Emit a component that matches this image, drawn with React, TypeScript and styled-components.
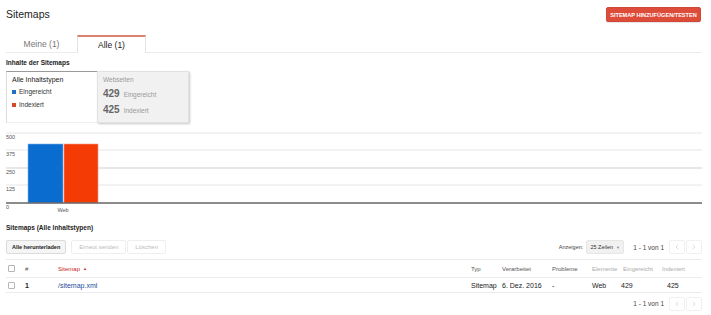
import React from 'react'
import styled, {createGlobalStyle, css} from 'styled-components'
import {ChevronLeft, ChevronRight} from 'lucide-react'

const GlobalStyle = createGlobalStyle`
  body {
    margin: 0;
    background: #fff;
    font-family: 'Liberation Sans', Arial, sans-serif;
    color: #222;
  }
`

const Page = styled.div`
  width: 711px;
  box-sizing: border-box;
  padding: 7px 9px 0 6px;
`

const Header = styled.div`
  display: flex;
  justify-content: space-between;
  align-items: flex-start;
  height: 15px;
`

const Title = styled.h1`
  margin: 0;
  font-size: 10.5px;
  line-height: 15px;
  font-weight: normal;
  color: #222;
`

const AddButton = styled.button`
  box-sizing: border-box;
  width: 95px;
  height: 15px;
  margin-right: 1px;
  padding: 0;
  background: #dd4b39;
  border: 1px solid #d14836;
  border-radius: 2px;
  color: #fff;
  font: bold 5.6px 'Liberation Sans', Arial, sans-serif;
  box-shadow: 0 1px 1px rgba(0, 0, 0, 0.1);
`

const TabBar = styled.div`
  display: flex;
  margin-top: 13px;
  height: 17px;
  border-bottom: 1px solid #ebebeb;
`

const Tab = styled.div<{$active?: boolean}>`
  box-sizing: border-box;
  height: 18px;
  display: flex;
  align-items: center;
  justify-content: center;
  font-size: 8.5px;
  width: 71px;
  color: #777;
  ${p =>
    p.$active &&
    css`
      width: 69px;
      color: #222;
      background: #fff;
      border-top: 2px solid #d8846f;
      border-left: 1px solid #e3e3e3;
      border-right: 1px solid #e3e3e3;
      margin-bottom: -1px;
    `}
`

const SectionTitle = styled.div<{$top: number}>`
  margin-top: ${p => p.$top}px;
  font-size: 6.5px;
  line-height: 8px;
  font-weight: bold;
  color: #222;
`

const LegendRow = styled.div`
  display: flex;
  margin-top: 4px;
  height: 52px;
`

const LegendBox = styled.div`
  box-sizing: border-box;
  width: 91px;
  padding: 3px 0 0 5px;
  border-top: 1px solid #9a9a9a;
  border-left: 1px solid #dcdcdc;
  border-bottom: 1px solid #eee;
  display: flex;
  flex-direction: column;
  gap: 3px;
`

const LegendHead = styled.div`
  font-size: 7px;
  line-height: 9px;
  color: #222;
`

const LegendItem = styled.div`
  display: flex;
  align-items: center;
  gap: 3px;
  font-size: 6.5px;
  line-height: 9px;
  color: #333;
  & + & {
    margin-top: 1px;
  }
`

const Swatch = styled.span<{$color: string}>`
  width: 4px;
  height: 4px;
  background: ${p => p.$color};
`

const StatsBox = styled.div`
  box-sizing: border-box;
  width: 92px;
  padding: 3px 0 0 5px;
  background: #f1f1f1;
  border: 1px solid #e2e2e2;
  box-shadow: 1px 1px 2px rgba(0, 0, 0, 0.22);
`

const StatsHead = styled.div`
  font-size: 6.5px;
  line-height: 9px;
  color: #999;
  margin-bottom: 2px;
`

const Stat = styled.div`
  display: flex;
  align-items: baseline;
  gap: 4px;
  height: 16px;
  line-height: 16px;
`

const StatValue = styled.span`
  font-size: 10px;
  font-weight: bold;
  color: #666;
`

const StatLabel = styled.span`
  font-size: 6.5px;
  color: #999;
`

const Chart = styled.svg`
  display: block;
  margin-top: 5px;
  font-family: 'Liberation Sans', Arial, sans-serif;
`

const Toolbar = styled.div`
  display: flex;
  align-items: center;
  margin-top: 8px;
  height: 14px;
`

const ActionButton = styled.button<{$primary?: boolean}>`
  box-sizing: border-box;
  height: 14px;
  padding: 0 7px;
  margin-right: 1px;
  background: #fff;
  border: 1px solid #eee;
  border-radius: 2px;
  color: #bbb;
  font: 6px 'Liberation Sans', Arial, sans-serif;
  ${p =>
    p.$primary &&
    css`
      padding: 0 5px;
      margin-right: 5px;
      background: #f5f5f5;
      border-color: #dcdcdc;
      color: #222;
      font-weight: bold;
      font-size: 5.5px;
    `}
`

const Spacer = styled.div`
  flex: 1;
`

const ShowLabel = styled.span`
  font-size: 5.5px;
  color: #444;
  margin-right: 3px;
`

const RowsSelect = styled.div`
  box-sizing: border-box;
  display: flex;
  align-items: center;
  justify-content: center;
  gap: 3px;
  width: 38px;
  height: 14px;
  background: #f1f1f1;
  border: 1px solid #e6e6e6;
  border-radius: 2px;
  font-size: 5.5px;
  color: #333;
`

const Caret = styled.span`
  font-size: 4px;
  color: #888;
`

const PageInfo = styled.span`
  font-size: 6.5px;
  color: #444;
  margin: 0 5px 0 9px;
`

const PageButton = styled.button`
  box-sizing: border-box;
  width: 16px;
  height: 14px;
  padding: 0;
  display: flex;
  align-items: center;
  justify-content: center;
  background: #fff;
  border: 1px solid #f0f0f0;
  border-radius: 2px;
  color: #bbb;
  & + & {
    margin-left: 1px;
  }
`

const Table = styled.div`
  margin-top: 5px;
  width: 696px;
`

const Row = styled.div<{$head?: boolean}>`
  display: grid;
  grid-template-columns: 17px 33px 413px 31px 50px 40px 31px 39px 42px;
  align-items: center;
  height: ${p => (p.$head ? 17 : 14)}px;
  border-top: 1px solid #ececec;
  ${p =>
    !p.$head &&
    css`
      border-bottom: 1px solid #ececec;
    `}
`

const HeadCell = styled.div<{$muted?: boolean; $sorted?: boolean}>`
  padding-left: 2px;
  font-size: 6px;
  color: ${p => (p.$sorted ? '#c5281c' : p.$muted ? '#aaa' : '#555')};
`

const Cell = styled.div<{$bold?: boolean; $link?: boolean; $shift?: number}>`
  padding-left: ${p => 2 + (p.$shift || 0)}px;
  font-size: 7px;
  color: ${p => (p.$link ? '#1f4e9c' : '#222')};
  font-weight: ${p => (p.$bold ? 'bold' : 'normal')};
`

const Checkbox = styled.span`
  display: block;
  box-sizing: border-box;
  width: 7px;
  height: 7px;
  border: 1px solid #b5b5b5;
  border-radius: 1px;
  background: #fff;
`

const SortArrow = styled.span`
  font-size: 4px;
  margin-left: 3px;
  vertical-align: 1px;
`

const Footer = styled.div`
  display: flex;
  align-items: center;
  justify-content: flex-end;
  height: 21px;
`

const grid = [
  {y: 5, label: '500', color: '#e6e6e6'},
  {y: 22, label: '375', color: '#e6e6e6'},
  {y: 40, label: '250', color: '#cfcfcf'},
  {y: 57, label: '125', color: '#e6e6e6'},
]

const Pager = () => (
  <>
    <PageInfo>1 - 1 von 1</PageInfo>
    <PageButton>
      <ChevronLeft size={8} strokeWidth={1.5} />
    </PageButton>
    <PageButton>
      <ChevronRight size={8} strokeWidth={1.5} />
    </PageButton>
  </>
)

export default function App() {
  return (
    <Page>
      <GlobalStyle />
      <Header>
        <Title>Sitemaps</Title>
        <AddButton>SITEMAP HINZUFÜGEN/TESTEN</AddButton>
      </Header>

      <TabBar>
        <Tab>Meine (1)</Tab>
        <Tab $active>Alle (1)</Tab>
      </TabBar>

      <SectionTitle $top={6}>Inhalte der Sitemaps</SectionTitle>

      <LegendRow>
        <LegendBox>
          <LegendHead>Alle Inhaltstypen</LegendHead>
          <LegendItem>
            <Swatch $color='#1f6fc5' />
            Eingereicht
          </LegendItem>
          <LegendItem>
            <Swatch $color='#d8472c' />
            Indexiert
          </LegendItem>
        </LegendBox>
        <StatsBox>
          <StatsHead>Webseiten</StatsHead>
          <Stat>
            <StatValue>429</StatValue>
            <StatLabel>Eingereicht</StatLabel>
          </Stat>
          <Stat>
            <StatValue>425</StatValue>
            <StatLabel>Indexiert</StatLabel>
          </Stat>
        </StatsBox>
      </LegendRow>

      <Chart width={696} height={90} viewBox='0 0 696 90'>
        {grid.map(g => (
          <g key={g.label}>
            <line x1={0} x2={696} y1={g.y} y2={g.y} stroke={g.color} strokeWidth={1} />
            <text x={0} y={g.y + 6} fontSize={5.5} fill='#555'>
              {g.label}
            </text>
          </g>
        ))}
        <rect x={22} y={16} width={35} height={59} fill='#0a6ccf' stroke='#7fb2e6' strokeWidth={0.6} />
        <rect x={58} y={16} width={34} height={59} fill='#f43b06' stroke='#f79a80' strokeWidth={0.6} />
        <line x1={0} x2={696} y1={75} y2={75} stroke='#666' strokeWidth={1.5} />
        <text x={0} y={81} fontSize={5.5} fill='#555'>
          0
        </text>
        <text x={57} y={84} fontSize={5.5} fill='#555' textAnchor='middle'>
          Web
        </text>
      </Chart>

      <SectionTitle $top={6}>Sitemaps (Alle Inhaltstypen)</SectionTitle>

      <Toolbar>
        <ActionButton $primary>Alle herunterladen</ActionButton>
        <ActionButton>Erneut senden</ActionButton>
        <ActionButton>Löschen</ActionButton>
        <Spacer />
        <ShowLabel>Anzeigen:</ShowLabel>
        <RowsSelect>
          25 Zeilen <Caret>▼</Caret>
        </RowsSelect>
        <Pager />
      </Toolbar>

      <Table>
        <Row $head>
          <HeadCell>
            <Checkbox />
          </HeadCell>
          <HeadCell>#</HeadCell>
          <HeadCell $sorted>
            Sitemap<SortArrow>▲</SortArrow>
          </HeadCell>
          <HeadCell>Typ</HeadCell>
          <HeadCell>Verarbeitet</HeadCell>
          <HeadCell>Probleme</HeadCell>
          <HeadCell $muted>Elemente</HeadCell>
          <HeadCell $muted>Eingereicht</HeadCell>
          <HeadCell $muted>Indexiert</HeadCell>
        </Row>
        <Row>
          <Cell>
            <Checkbox />
          </Cell>
          <Cell $bold>1</Cell>
          <Cell $link>/sitemap.xml</Cell>
          <Cell>Sitemap</Cell>
          <Cell>6. Dez. 2016</Cell>
          <Cell>-</Cell>
          <Cell>Web</Cell>
          <Cell $shift={-2}>429</Cell>
          <Cell $shift={5}>425</Cell>
        </Row>
      </Table>

      <Footer>
        <Pager />
      </Footer>
    </Page>
  )
}
